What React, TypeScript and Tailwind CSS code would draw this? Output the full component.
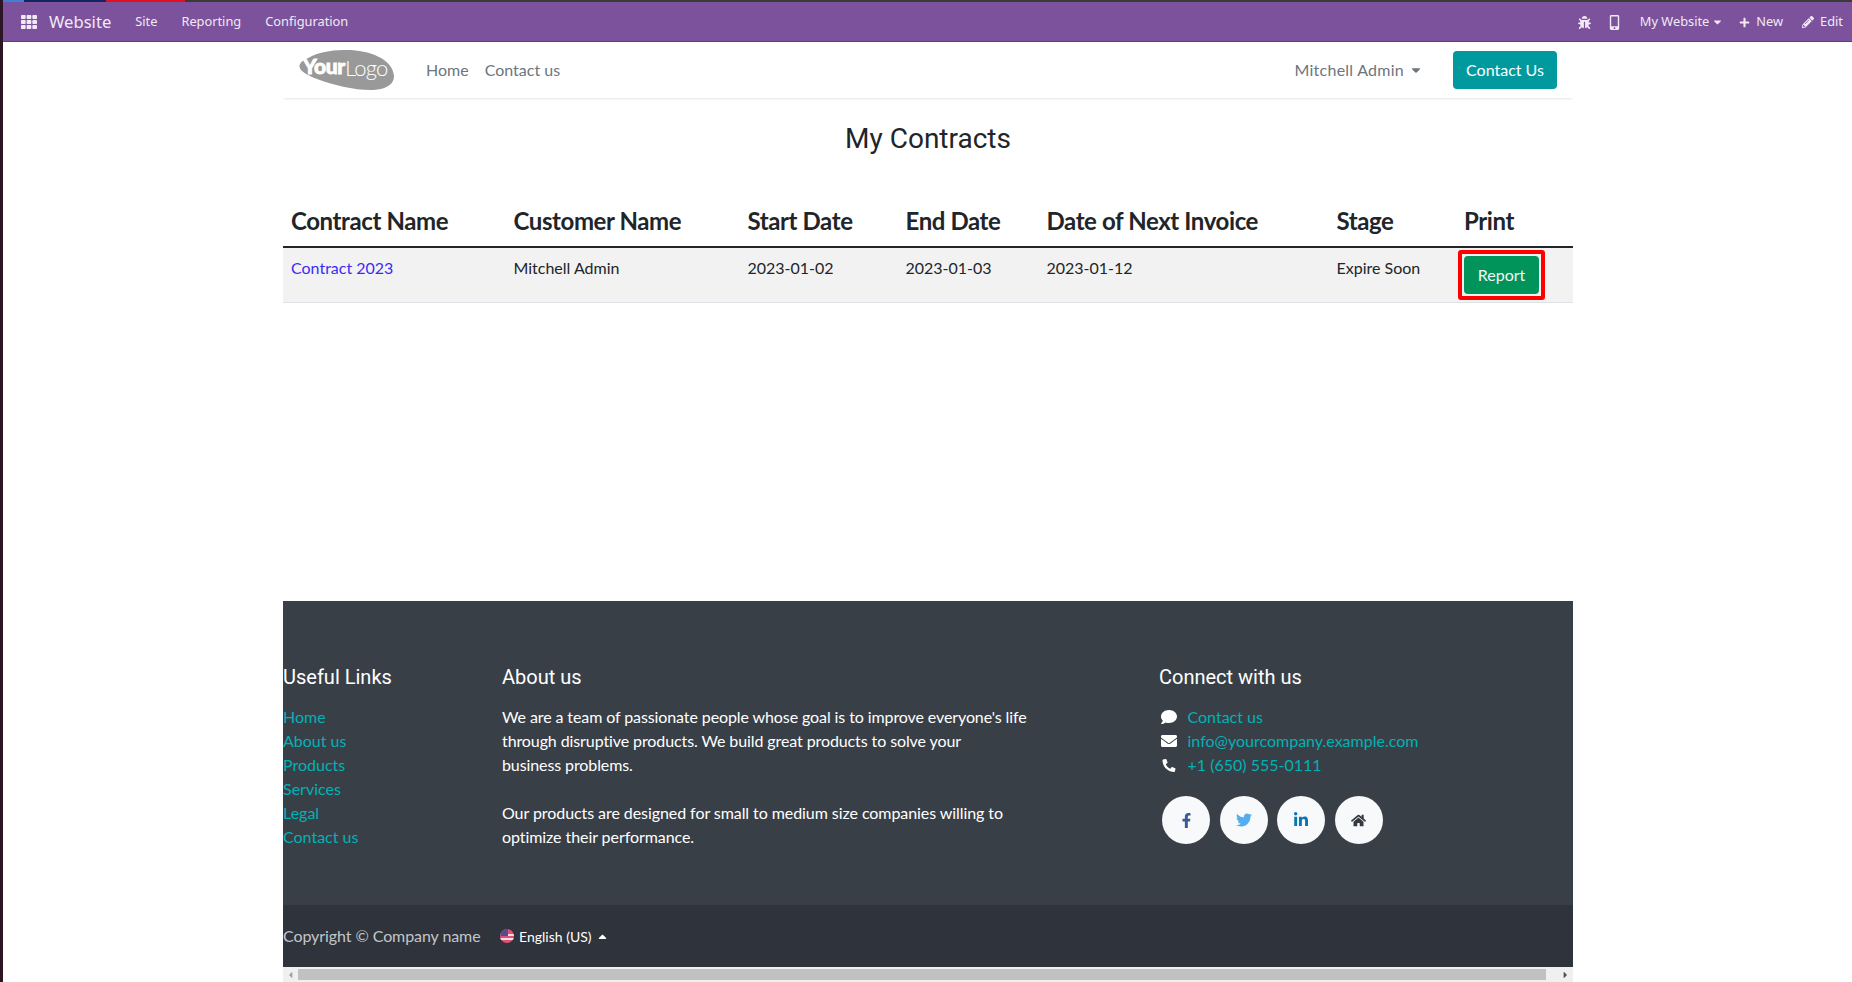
import React from "react";
import { FaBug, FaCaretDown, FaCaretLeft, FaCaretRight, FaCaretUp, FaComment, FaEnvelope, FaFacebookF, FaHome, FaLinkedinIn, FaMobileAlt, FaPencilAlt, FaPhone, FaPlus, FaTh, FaTwitter } from "react-icons/fa";

const lato = "font-['Lato','Liberation_Sans',sans-serif]";
const roboto = "font-['Roboto','Liberation_Sans',sans-serif]";

function Logo() {
  return (
    <svg width="96" height="42" viewBox="0 0 96 42" className="block">
      <path d="M1 15 C3 11 8 10 13 7 C24 2 36 1 48 1 C70 1 94 10 95 27 C95 37 84 41 72 41 C54 41 34 36 18 30 C8 26 -2 21 1 15 Z" fill="#999999" />
      <text x="4" y="25" fontFamily="Lato, sans-serif" fontWeight="900" fontSize="21" fill="#ffffff" stroke="#ffffff" strokeWidth="0.8" letterSpacing="-0.4">Your</text>
      <text x="46" y="27" fontFamily="Lato, sans-serif" fontWeight="300" fontSize="22" fill="#ffffff" letterSpacing="-0.8">Logo</text>
    </svg>
  );
}

function Flag() {
  return (
    <svg width="14" height="14" viewBox="0 0 14 14" className="block">
      <clipPath id="f"><circle cx="7" cy="7" r="7" /></clipPath>
      <g clipPath="url(#f)">
        <rect width="14" height="14" fill="#e0517a" />
        <rect y="5" width="14" height="2" fill="#f6dfe5" />
        <rect y="9" width="14" height="2" fill="#f6dfe5" />
        <rect width="8" height="7" fill="#5a4a8a" />
      </g>
    </svg>
  );
}

const usefulLinks = ["Home", "About us", "Products", "Services", "Legal", "Contact us"];

const rows = ["w-[222.5px]", "w-[234px]", "w-[158px]", "w-[141px]", "w-[290px]", "w-[127.5px]", "w-[117px]"];
const heads = ["Contract Name", "Customer Name", "Start Date", "End Date", "Date of Next Invoice", "Stage", "Print"];
const cells = ["Mitchell Admin", "2023-01-02", "2023-01-03", "2023-01-12", "Expire Soon"];

export default function App() {
  return (
    <div className={`flex h-screen w-full flex-col overflow-hidden bg-white ${lato} text-[16px] text-[#212529]`}>
      <div className="flex h-[2px] shrink-0 bg-[#3a3a3a]">
        <div className="w-[3px] bg-[#2c1524]" />
        <div className="w-[21px] bg-[#3f7fd8]" />
        <div className="w-[82px] bg-[#14245e]" />
        <div className="w-[79px] bg-[#e01020]" />
      </div>
      <div className="flex min-h-0 flex-1">
        <div className="w-[3px] shrink-0 bg-[#2c1524]" />
        <div className="flex min-w-0 flex-1 flex-col">
          <nav className="flex h-[40px] shrink-0 items-center border-b border-[#5f3f78] bg-[#7c529c] pt-[1px] font-['Noto_Sans','Liberation_Sans',sans-serif] text-[12.8px] text-[#f1e9f5]">
            <FaTh className="ml-[18px] h-[16px] w-[16px]" />
            <span className="ml-[12px] text-[16.6px] leading-none">Website</span>
            <span className="ml-[24px]">Site</span>
            <span className="ml-[24px]">Reporting</span>
            <span className="ml-[24px]">Configuration</span>
            <FaBug className="ml-auto h-[13px] w-[13px]" />
            <FaMobileAlt className="ml-[17px] h-[15px] w-[13px]" />
            <span className="ml-[18.5px]">My Website</span>
            <FaCaretDown className="ml-[3px] h-[12px] w-[11px]" />
            <FaPlus className="ml-[16px] h-[11px] w-[11px]" />
            <span className="ml-[6px]">New</span>
            <FaPencilAlt className="ml-[19px] h-[12px] w-[12px]" />
            <span className="ml-[6px] mr-[9px]">Edit</span>
          </nav>

          <div className="ml-[280px] flex min-h-0 w-[1290px] flex-1 flex-col">
            <header className="flex h-[56px] shrink-0 items-center shadow-[0_2px_2px_-1px_rgba(0,0,0,0.1)]">
              <div className="ml-[16px]"><Logo /></div>
              <a className="ml-[31px] text-[#6c757d]">Home</a>
              <a className="ml-[16px] text-[#6c757d]">Contact us</a>
              <span className="ml-auto tracking-[0.25px] text-[#6c757d]">Mitchell Admin</span>
              <FaCaretDown className="ml-[6px] h-[14px] w-[12px] text-[#6c757d]" />
              <a className="ml-[31px] mr-[16px] flex h-[38px] w-[104px] items-center justify-center rounded-[4px] bg-[#009a9e] text-white">Contact Us</a>
            </header>

            <main className="min-h-0 flex-1">
              <h1 className={`mt-[20px] text-center ${roboto} text-[28px] font-normal leading-[42px]`}>My Contracts</h1>
              <table className="mt-[28px] w-full table-fixed border-collapse">
                <thead>
                  <tr className="h-[59px] border-b-2 border-[#212529]">
                    {heads.map((h, i) => (
                      <th key={h} className={`${rows[i]} px-[8px] pt-[8px] text-left text-[24px] font-bold leading-[36px] tracking-[-0.4px]`}>{h}</th>
                    ))}
                  </tr>
                </thead>
                <tbody>
                  <tr className="h-[55px] border-b border-[#dee2e6] bg-[#f2f2f2] align-top">
                    <td className="px-[8px] pt-[8px]"><a className="text-[#3d2bf5]">Contract 2023</a></td>
                    {cells.map((c) => (
                      <td key={c} className="px-[8px] pt-[8px]">{c}</td>
                    ))}
                    <td className="pl-[2px] pt-[2px]">
                      <div className="inline-flex rounded-[3px] border-4 border-[#ff0000] p-[2px]">
                        <a className="flex h-[38px] w-[75px] items-center justify-center rounded-[4px] bg-[#00945b] text-[#f2f7f4]">Report</a>
                      </div>
                    </td>
                  </tr>
                </tbody>
              </table>
            </main>

            <footer className="shrink-0 bg-[#393f47] text-white">
              <div className="grid h-[304px] grid-cols-[219px_657px_1fr] pt-[61px]">
                <div>
                  <h5 className={`${roboto} text-[20px] font-normal leading-[30px]`}>Useful Links</h5>
                  <ul className="mt-[13px] leading-[24px] text-[#00b2b5]">
                    {usefulLinks.map((l) => <li key={l}>{l}</li>)}
                  </ul>
                </div>
                <div>
                  <h5 className={`${roboto} text-[20px] font-normal leading-[30px]`}>About us</h5>
                  <p className="mt-[13px] leading-[24px] tracking-[-0.1px]">
                    We are a team of passionate people whose goal is to improve everyone's life<br />
                    through disruptive products. We build great products to solve your<br />
                    business problems.
                  </p>
                  <p className="mt-[24px] leading-[24px] tracking-[-0.07px]">
                    Our products are designed for small to medium size companies willing to<br />
                    optimize their performance.
                  </p>
                </div>
                <div>
                  <h5 className={`${roboto} text-[20px] font-normal leading-[30px]`}>Connect with us</h5>
                  <ul className="mt-[13px] leading-[24px] text-[#00b2b5]">
                    <li className="flex items-center"><FaComment className="ml-[2px] mr-[10.5px] h-[16px] w-[16px] text-white" />Contact us</li>
                    <li className="flex items-center"><FaEnvelope className="ml-[2px] mr-[10.5px] h-[16px] w-[16px] text-white" />info@yourcompany.example.com</li>
                    <li className="flex items-center"><FaPhone className="ml-[3px] mr-[11.5px] h-[13px] w-[14px] scale-x-[-1] text-white" />+1 (650) 555-0111</li>
                  </ul>
                  <div className="ml-[3px] mt-[19px] flex gap-[9.6px]">
                    <span className="flex h-[48px] w-[48px] items-center justify-center rounded-full bg-[#f8f9fa] text-[#3b5998]"><FaFacebookF className="h-[15px] w-[15px]" /></span>
                    <span className="flex h-[48px] w-[48px] items-center justify-center rounded-full bg-[#f8f9fa] text-[#55acee]"><FaTwitter className="h-[16px] w-[16px]" /></span>
                    <span className="flex h-[48px] w-[48px] items-center justify-center rounded-full bg-[#f8f9fa] text-[#0976b4]"><FaLinkedinIn className="h-[16px] w-[16px]" /></span>
                    <span className="flex h-[48px] w-[48px] items-center justify-center rounded-full bg-[#f8f9fa] text-[#343a40]"><FaHome className="h-[15px] w-[15px]" /></span>
                  </div>
                </div>
              </div>
              <div className="flex h-[62px] items-center bg-[#2f333b]">
                <span className="tracking-[-0.08px] text-[#c3c6c9]">Copyright © Company name</span>
                <span className="ml-[19px]"><Flag /></span>
                <span className="ml-[5.5px] text-[14px]">English (US)</span>
                <FaCaretUp className="ml-[5px] h-[13px] w-[11px]" />
              </div>
            </footer>

            <div className="flex h-[15px] shrink-0 items-center bg-[#f0f0f0]">
              <FaCaretLeft className="ml-[3px] h-[10px] w-[9px] text-[#a3a3a3]" />
              <div className="ml-[3px] h-[11px] flex-1 bg-[#c1c1c1]" />
              <FaCaretRight className="ml-[15px] mr-[3px] h-[10px] w-[9px] text-[#505050]" />
            </div>
          </div>
        </div>
      </div>
    </div>
  );
}
